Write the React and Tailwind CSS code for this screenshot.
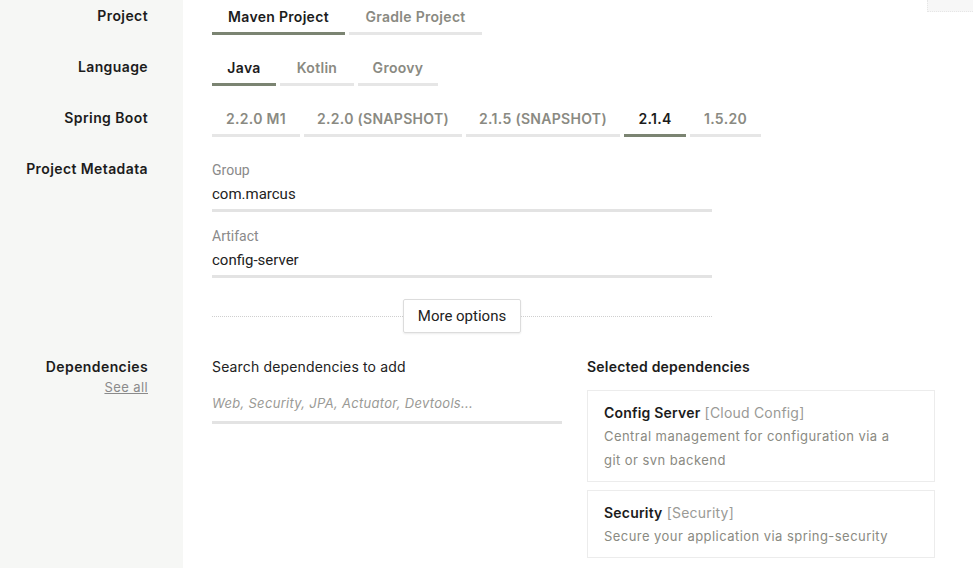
import { useState } from 'react'

const FONT = { fontFamily: 'Inter, "Open Sans", sans-serif' }
const NARROW = { fontFamily: '"Liberation Sans Narrow", "Roboto", sans-serif' }

function Tabs({ items, active }) {
  return (
    <div className="flex gap-[4px]">
      {items.map(it => (
        <div
          key={it.label}
          className={`h-[35px] flex items-center justify-center border-b-[3px] text-[14px] font-semibold tracking-[0.3px] ${
            it.label === active ? 'border-[#7b8472] text-[#1c1c1c]' : 'border-[#e6e6e6] text-[#8a8a82]'
          }`}
          style={{ width: it.w }}
        >
          {it.label}
        </div>
      ))}
    </div>
  )
}

function Row({ label, children }) {
  return (
    <div className="flex">
      <div className="w-[183px] shrink-0 bg-[#f6f7f5] pr-[35px] text-right">
        <div className="text-[14px] font-semibold text-[#1c1c1c] leading-[20px] pt-[6px] tracking-[0.4px]">{label}</div>
      </div>
      <div className="pl-[29px] flex-1">{children}</div>
    </div>
  )
}

function Field({ label, value }) {
  return (
    <div className="w-[500px]" style={NARROW}>
      <div className="text-[14px] text-[#8a8a8a] leading-[16px]">{label}</div>
      <div className="text-[15px] text-[#222] leading-[18px] mt-[7px] pb-[6px] border-b-[3px] border-[#e3e3e3]">{value}</div>
    </div>
  )
}

function Gap({ h }) {
  return (
    <div className="flex" style={{ height: h }}>
      <div className="w-[183px] bg-[#f6f7f5]" />
    </div>
  )
}

function DepCard({ name, group, desc }) {
  return (
    <div className="border border-[#ececec] px-[16px] pt-[12px] pb-[9px]">
      <div className="text-[14px] leading-[20px] tracking-[0.2px]">
        <span className="font-semibold text-[#1c1c1c]">{name}</span>{' '}
        <span className="text-[#9a9a96]">[{group}]</span>
      </div>
      <div className="max-w-[296px] text-[13px] text-[#8a8a82] leading-[24px] mt-[1px] tracking-[0.45px]">{desc}</div>
    </div>
  )
}

export default function App() {
  const [q] = useState('')
  return (
    <div className="relative w-[973px] h-[568px] bg-white overflow-hidden" style={FONT}>
      <div className="absolute right-0 top-0 w-[46px] h-[12px] bg-[#f7f7f7] border-b border-l border-dotted border-[#e6e6e6]" />
      <div className="flex flex-col h-full">
        <Row label="Project">
          <Tabs
            active="Maven Project"
            items={[{ label: 'Maven Project', w: 133 }, { label: 'Gradle Project', w: 133 }]}
          />
        </Row>
        <Gap h={16} />
        <Row label="Language">
          <Tabs
            active="Java"
            items={[{ label: 'Java', w: 64 }, { label: 'Kotlin', w: 74 }, { label: 'Groovy', w: 80 }]}
          />
        </Row>
        <Gap h={16} />
        <Row label="Spring Boot">
          <Tabs
            active="2.1.4"
            items={[
              { label: '2.2.0 M1', w: 88 },
              { label: '2.2.0 (SNAPSHOT)', w: 158 },
              { label: '2.1.5 (SNAPSHOT)', w: 154 },
              { label: '2.1.4', w: 62 },
              { label: '1.5.20', w: 71 },
            ]}
          />
        </Row>
        <Gap h={16} />
        <Row label="Project Metadata">
          <div className="pt-[9px]">
            <Field label="Group" value="com.marcus" />
            <div className="h-[16px]" />
            <Field label="Artifact" value="config-server" />
            <div className="w-[500px] flex items-center mt-[21px]">
              <div className="flex-1 border-t border-dotted border-[#cfcfcf]" />
              <div
                className="h-[34px] w-[118px] flex items-center justify-center border border-[#dcdcdc] rounded-[2px] text-[15px] text-[#222] shadow-[0_1px_2px_rgba(0,0,0,0.08)]"
                style={NARROW}
              >
                More options
              </div>
              <div className="flex-1 border-t border-dotted border-[#cfcfcf]" />
            </div>
          </div>
        </Row>
        <Gap h={24} />
        <div className="flex flex-1">
          <div className="w-[183px] shrink-0 bg-[#f6f7f5] pr-[35px] text-right">
            <div className="text-[14px] font-semibold text-[#1c1c1c] leading-[20px] tracking-[0.4px]">Dependencies</div>
            <div className="text-[13px] text-[#8a8a8a] underline leading-[20px] tracking-[0.4px]">See all</div>
          </div>
          <div className="pl-[29px] flex gap-[25px]">
            <div className="w-[350px]">
              <div className="text-[14px] text-[#222] leading-[20px] tracking-[0.15px]">Search dependencies to add</div>
              <div className="mt-[18px] pb-[10px] border-b-[3px] border-[#e3e3e3] text-[13px] italic text-[#9a9a96] leading-[16px] tracking-[0.3px]">
                {q || 'Web, Security, JPA, Actuator, Devtools...'}
              </div>
            </div>
            <div className="w-[348px]">
              <div className="text-[14px] font-semibold text-[#1c1c1c] leading-[20px] tracking-[0.2px]">Selected dependencies</div>
              <div className="mt-[13px] flex flex-col gap-[8px]">
                <DepCard
                  name="Config Server"
                  group="Cloud Config"
                  desc="Central management for configuration via a git or svn backend"
                />
                <DepCard
                  name="Security"
                  group="Security"
                  desc="Secure your application via spring-security"
                />
              </div>
            </div>
          </div>
        </div>
      </div>
    </div>
  )
}
